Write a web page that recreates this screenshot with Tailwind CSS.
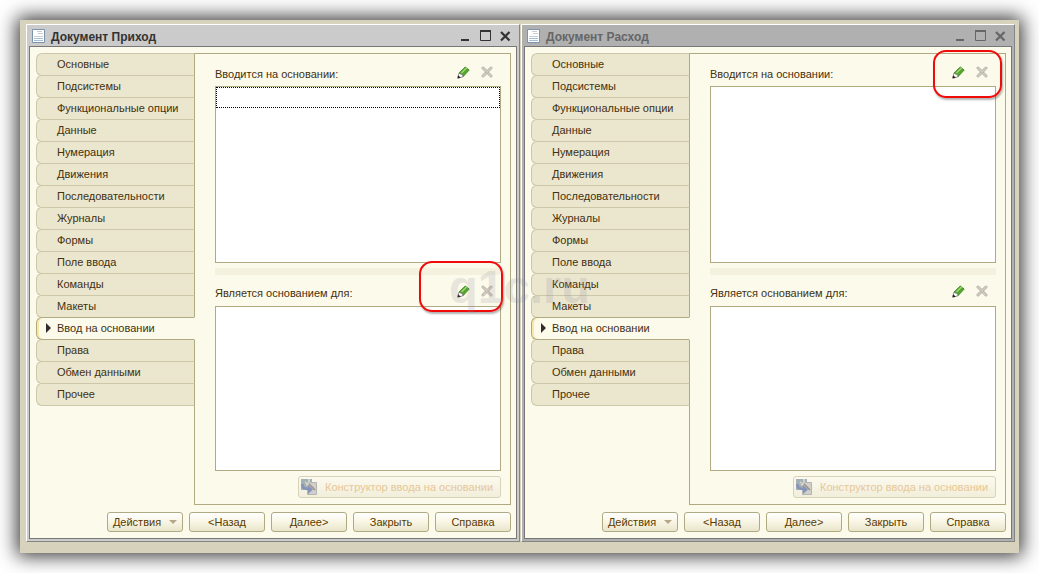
<!DOCTYPE html>
<html lang="ru">
<head>
<meta charset="utf-8">
<title>Ввод на основании</title>
<script src="https://cdn.jsdelivr.net/npm/@tailwindcss/browser@4"></script>
</head>
<body class="bg-white font-['Liberation_Sans',Arial,sans-serif] text-[11px] leading-4 text-[#43310f]">
<svg class="hidden" aria-hidden="true">
  <symbol id="doc" viewBox="0 0 13 14"><path fill="#fff" stroke="#7c93ab" d="M.5.5h12v13H.5z"/><path stroke="#c9cdd0" d="M5 2.500h5M6 4.500h5M2 7.500h9"/><path stroke="#9fc0d8" d="M2 9.500h9M2 11.500h9"/></symbol>
  <symbol id="pencil" viewBox="0 0 13 13"><path fill="#55a52f" stroke="#35851b" stroke-width=".8" d="M2 7 8.200 1l4 3L6 10.800z"/><path stroke="#a6db7c" stroke-width="1.200" d="m4.500 7 5-5"/><path fill="#fff" stroke="#666" stroke-width=".7" d="M2 7 .800 12l5.200-1.200-.5-2.300-2-.5z"/><path fill="#222" d="m.5 12.500.6-3.300 2.700 2.500z"/></symbol>
  <symbol id="cross" viewBox="0 0 12 12"><path stroke="#b9b3a9" stroke-width="3" stroke-linecap="round" d="m2 2 8 8M10 2l-8 8"/><path stroke="#d3cdc3" stroke-width="1.400" stroke-linecap="round" d="m2 2 8 8M10 2l-8 8"/></symbol>
  <symbol id="wizard" viewBox="0 0 16 16"><path fill="#a3b0b4" d="M0 0h11v11H0z"/><path fill="#d0d0cb" stroke="#b3b5b5" d="M8.500 3.500h7v12h-9v-5z"/><path stroke="#dcd9d0" stroke-width="1.500" d="m4 3 3 2M8 0v4M5 6l3-1"/><path stroke="#a48d84" stroke-width="1.600" d="m8 5 6 6"/><path fill="none" stroke="#8494ba" stroke-width="2.600" d="M1.500 5v2q.5 3 6.500 3"/><path fill="#8494ba" d="m7 6 5 4.500L7 15z"/></symbol>
  <symbol id="min" viewBox="0 0 12 12"><path stroke="currentColor" stroke-width="2" d="M1 10h8"/></symbol>
  <symbol id="max" viewBox="0 0 12 12"><path fill="none" stroke="currentColor" d="M.5 1.500h10v9H.5z"/><path stroke="currentColor" stroke-width="2" d="M0 1h11"/></symbol>
  <symbol id="close" viewBox="0 0 12 12"><path stroke="currentColor" stroke-width="2.200" d="m1 2 8.500 8.500M9.500 2 1 10.500"/></symbol>
</svg>

<main class="relative h-screen min-h-[520px] p-5">
  <div id="desk" class="grid h-full grid-cols-2 gap-px bg-[#d6d2bc] pt-1 pr-1 pb-[11px] pl-1.5 shadow-[0_0_18px_3px_rgba(0,0,0,0.8)]"></div>
  <div class="pointer-events-none absolute inset-x-0 top-[259px] z-20 text-center text-[47px] leading-[56px] font-bold text-[#8c8ca0]/20">q1c.ru</div>
</main>

<template id="win">
  <section class="group flex min-w-0 flex-col border border-t-white border-l-white border-r-[#858585] border-b-[#858585] bg-[#cbcbcb] px-0.5 pb-0.5 text-[#333] data-inactive:bg-[#b0b0b0] data-inactive:text-[#666]">
    <header class="flex h-[21px] shrink-0 items-center pr-[5px] pl-[3px]">
      <svg class="h-3.5 w-[13px]"><use href="#doc"/></svg>
      <h1 class="ml-1.5 flex-1 pt-0.5 text-xs font-bold"></h1>
      <div class="flex gap-2 pt-px">
        <button aria-label="Свернуть"><svg class="size-3"><use href="#min"/></svg></button>
        <button aria-label="Развернуть"><svg class="size-3"><use href="#max"/></svg></button>
        <button aria-label="Закрыть окно"><svg class="size-3"><use href="#close"/></svg></button>
      </div>
    </header>
    <div class="flex flex-1 flex-col border border-[#777] bg-[#fcfaeb] pt-1.5 pr-[5px] pb-1.5 pl-1.5 text-[#43310f]">
      <div class="flex flex-1">
        <nav class="z-10 -mr-px flex w-[159px] shrink-0 flex-col"></nav>
        <div class="flex min-w-0 flex-1 flex-col border border-[#b0aa82] pr-[9px] pb-1.5 pl-5">
          <div class="flex h-8 shrink-0 items-center justify-between pt-2">
            <span>Вводится на основании:</span>
            <div class="relative mr-2 mb-1 flex gap-[11px]">
              <button aria-label="Изменить"><svg class="size-[13px]"><use href="#pencil"/></svg></button>
              <button disabled aria-label="Удалить"><svg class="size-3"><use href="#cross"/></svg></button>
              <i class="absolute -top-4 -right-3.5 hidden h-12 w-[69px] rounded-[13px] border-2 border-[#f00a0a] shadow-[1px_2px_2px_rgba(0,0,0,0.3)] group-data-inactive:block"></i>
            </div>
          </div>
          <div class="flex-[177] border border-[#b0aa82] bg-white"><div class="h-[21px] border border-dotted border-black group-data-inactive:hidden"></div></div>
          <div class="mt-[5px] h-[7px] shrink-0 bg-[#f4f1df]"></div>
          <div class="flex h-[31px] shrink-0 items-center justify-between pt-1.5">
            <span>Является основанием для:</span>
            <div class="relative mr-2 mb-1 flex gap-[11px]">
              <button aria-label="Изменить"><svg class="size-[13px]"><use href="#pencil"/></svg></button>
              <button disabled aria-label="Удалить"><svg class="size-3"><use href="#cross"/></svg></button>
              <i class="absolute -top-6 -right-2.5 h-[51px] w-[84px] rounded-[13px] border-2 border-[#f00a0a] shadow-[1px_2px_2px_rgba(0,0,0,0.3)] group-data-inactive:hidden"></i>
            </div>
          </div>
          <div class="flex-[165] border border-[#b0aa82] bg-white"></div>
          <button disabled class="mt-[5px] flex h-[22px] w-[203px] shrink-0 items-center gap-2 self-end rounded-[3px] border border-[#d8d3b8] bg-linear-to-b from-[#fcfaee] to-[#f1eedb] pl-0.5 whitespace-nowrap text-[#e8c798]">
            <svg class="size-4"><use href="#wizard"/></svg>Конструктор ввода на основании
          </button>
        </div>
      </div>
      <footer class="mt-[7px] flex justify-end gap-1.5"></footer>
    </div>
  </section>
</template>
<template id="tab">
  <a href="#" class="-mb-px flex h-[23px] items-center rounded-l-md border border-[#cdc7a9] border-r-[#b0aa82] bg-[#ebe6ce] pb-0.5 pl-5 aria-[current]:relative aria-[current]:z-10 aria-[current]:border-[#b0aa82] aria-[current]:border-r-[#fcfaeb] aria-[current]:bg-[#fcfaeb] aria-[current]:shadow-[inset_2px_0_#f7e9a3] aria-[current]:before:absolute aria-[current]:before:left-[9px] aria-[current]:before:border-y-[5px] aria-[current]:before:border-l-[5px] aria-[current]:before:border-y-transparent aria-[current]:before:border-l-[#332b2b]"></a>
</template>
<template id="btn">
  <button class="flex h-5 w-[76px] items-center justify-center rounded-[3px] border border-[#b0aa82] bg-linear-to-b from-white via-[#f8f5e4] to-[#e9e5cb] text-[#5a3a00]"></button>
</template>
<script>
const tpl = id => document.getElementById(id).content.firstElementChild.cloneNode(true);
const tabs = ['Основные','Подсистемы','Функциональные опции','Данные','Нумерация','Движения','Последовательности','Журналы','Формы','Поле ввода','Команды','Макеты','Ввод на основании','Права','Обмен данными','Прочее'];
const buttons = ['Действия','<Назад','Далее>','Закрыть','Справка'];
['Документ Приход','Документ Расход'].forEach((title, i) => {
  const w = tpl('win');
  if (i) w.dataset.inactive = '';
  w.querySelector('h1').textContent = title;
  tabs.forEach(t => {
    const a = tpl('tab');
    a.textContent = t;
    if (t === 'Ввод на основании') a.setAttribute('aria-current', 'page');
    w.querySelector('nav').append(a);
  });
  buttons.forEach((t, k) => {
    const b = tpl('btn');
    b.textContent = t;
    if (!k) b.insertAdjacentHTML('beforeend', '<span class="ml-2 border-x-4 border-t-4 border-x-transparent border-t-[#b5a888]"></span>');
    w.querySelector('footer').append(b);
  });
  document.getElementById('desk').append(w);
});
</script>
</body>
</html>
